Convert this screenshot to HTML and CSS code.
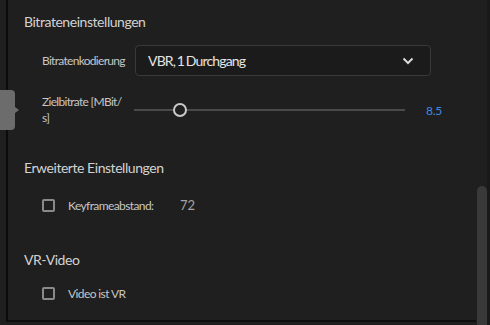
FILE: index.html
```html
<!DOCTYPE html>
<html lang="de">
<head>
<meta charset="utf-8">
<link rel="stylesheet" href="styles.css">
</head>
<body>
<div class="panel">
  <section class="sec sec-bitrate">
    <h2 class="heading">Bitrateneinstellungen</h2>
    <div class="row row-select">
      <span class="label">Bitratenkodierung</span>
      <div class="select">
        <span class="select-text">VBR, 1 Durchgang</span>
        <svg class="chev" width="12" height="8" viewBox="0 0 12 8"><path d="M1.5 1.5 L6 6 L10.5 1.5" fill="none" stroke="#d8d8d8" stroke-width="2"/></svg>
      </div>
    </div>
    <div class="row row-slider">
      <span class="label label-wrap">Zielbitrate [MBit/<br>s]</span>
      <div class="slider">
        <div class="track"></div>
        <div class="thumb" style="left:46px"></div>
      </div>
      <span class="value">8.5</span>
    </div>
  </section>
  <section class="sec sec-adv">
    <h2 class="heading">Erweiterte Einstellungen</h2>
    <div class="row row-check">
      <span class="box"></span>
      <span class="check-label check-label-fixed">Keyframeabstand:</span>
      <span class="num">72</span>
    </div>
  </section>
  <section class="sec sec-vr">
    <h2 class="heading">VR-Video</h2>
    <div class="row row-check row-check-vr">
      <span class="box"></span>
      <span class="check-label">Video ist VR</span>
    </div>
  </section>
</div>
<div class="handle"></div>
<div class="handle-arrow"></div>
<div class="scrollbar"></div>
<div class="right-edge"></div>
</body>
</html>
```
FILE: styles.css
```css
* { box-sizing: border-box; }
html, body {
  margin: 0;
  padding: 0;
  background: #1f1f1f;
  width: 490px;
  height: 325px;
  overflow: hidden;
  font-family: Lato, "Open Sans", sans-serif;
}
.panel {
  margin-left: 6px;
  width: 470px;
  height: 322px;
  border-left: 2px solid #0b0b0b;
  border-bottom: 2px solid #0f0f0f;
  padding-left: 16px;
  padding-top: 12px;
}
.heading {
  margin: 0;
  font-size: 14px;
  line-height: 20px;
  font-weight: 400;
  letter-spacing: -0.45px;
  color: #d2d2d2;
  height: 20px;
}
.row {
  display: flex;
  align-items: center;
  padding-left: 18px;
}
.row-select {
  margin-top: 13px;
  height: 31px;
}
.label {
  width: 93px;
  flex: none;
  font-size: 12px;
  letter-spacing: -0.7px;
  white-space: nowrap;
  color: #c6c6c6;
}
.label-wrap {
  width: 92px;
  line-height: 16px;
}
.select {
  width: 296px;
  height: 31px;
  border: 1px solid #393939;
  border-radius: 4px;
  background: #1b1b1b;
  display: flex;
  align-items: center;
  justify-content: space-between;
  padding: 0 16px 0 12px;
}
.select-text {
  font-size: 14px;
  letter-spacing: -0.85px;
  word-spacing: -1px;
  color: #e4e4e4;
}
.chev { display: block; }
.row-slider {
  margin-top: 18px;
  height: 32px;
}
.slider {
  position: relative;
  width: 271px;
  height: 16px;
  flex: none;
}
.track {
  position: absolute;
  left: 0;
  right: 0;
  top: 7px;
  height: 2px;
  background: #4a4a4a;
}
.thumb {
  position: absolute;
  top: 1px;
  width: 14px;
  height: 14px;
  margin-left: -7px;
  border: 2px solid #c9c9c9;
  border-radius: 50%;
  background: #1f1f1f;
}
.value {
  margin-left: 21px;
  font-size: 12px;
  letter-spacing: -0.3px;
  color: #3d8ae0;
}
.sec-adv { margin-top: 32px; }
.sec-vr { margin-top: 35px; }
.row-check {
  margin-top: 17px;
  height: 20px;
}
.row-check-vr { margin-top: 13px; }
.box {
  width: 13px;
  height: 13px;
  border: 2px solid #8a8a8a;
  border-radius: 2px;
  flex: none;
}
.check-label {
  margin-left: 13px;
  font-size: 12px;
  letter-spacing: -0.6px;
  color: #c6c6c6;
}
.check-label-fixed {
  width: 112px;
}
.num {
  font-size: 13px;
  color: #a3a3a3;
}
.handle {
  position: absolute;
  left: 0;
  top: 90px;
  width: 15px;
  height: 40px;
  background: #6c6c6c;
  border-radius: 0 4px 4px 0;
}
.handle-arrow {
  position: absolute;
  left: 15px;
  top: 107px;
  width: 0;
  height: 0;
  border-top: 3px solid transparent;
  border-bottom: 3px solid transparent;
  border-left: 4px solid #6c6c6c;
}
.scrollbar {
  position: absolute;
  left: 477px;
  top: 186px;
  width: 10px;
  height: 139px;
  background: #393939;
  border-radius: 5px 5px 0 0;
}
.right-edge {
  position: absolute;
  left: 487px;
  top: 0;
  width: 3px;
  height: 325px;
  background: #191919;
}
```
